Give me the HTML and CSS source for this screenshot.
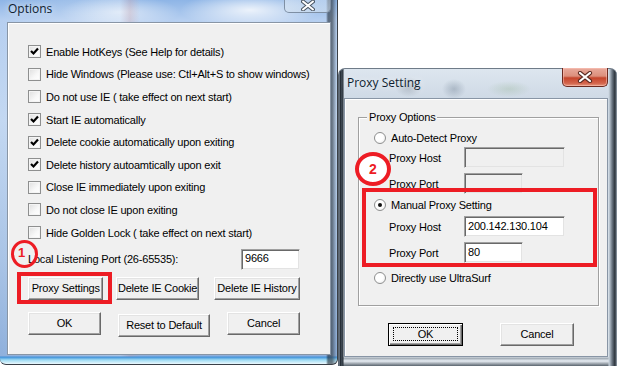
FILE: index.html
```html
<!DOCTYPE html>
<html>
<head>
<meta charset="utf-8">
<title>Options / Proxy Setting</title>
<link rel="stylesheet" href="styles.css">
</head>
<body>
<div class="desk">

  <div class="win win-options">
    <div class="titlebar">
      <span class="title">Options</span>
      <span class="close close-inactive">
        <svg width="14" height="11" viewBox="0 0 14 11"><path d="M2 1.5 L12 9.5 M12 1.5 L2 9.5" stroke="#4a5563" stroke-width="4" stroke-linecap="round"/><path d="M2 1.5 L12 9.5 M12 1.5 L2 9.5" stroke="#fff" stroke-width="2" stroke-linecap="round"/></svg>
      </span>
    </div>
    <div class="client client-options">
      <div class="checks">
        <div class="check-row"><span class="cb on"><svg width="11" height="11" viewBox="0 0 11 11"><polyline points="2,5 4.5,7.5 9,2.5" fill="none" stroke="#000" stroke-width="2.2"/></svg></span><span>Enable HotKeys (See Help for details)</span></div>
        <div class="check-row"><span class="cb"></span><span>Hide Windows (Please use: Ctl+Alt+S to show windows)</span></div>
        <div class="check-row"><span class="cb"></span><span>Do not use IE ( take effect on next start)</span></div>
        <div class="check-row"><span class="cb on"><svg width="11" height="11" viewBox="0 0 11 11"><polyline points="2,5 4.5,7.5 9,2.5" fill="none" stroke="#000" stroke-width="2.2"/></svg></span><span>Start IE automatically</span></div>
        <div class="check-row"><span class="cb on"><svg width="11" height="11" viewBox="0 0 11 11"><polyline points="2,5 4.5,7.5 9,2.5" fill="none" stroke="#000" stroke-width="2.2"/></svg></span><span>Delete cookie automatically upon exiting</span></div>
        <div class="check-row"><span class="cb on"><svg width="11" height="11" viewBox="0 0 11 11"><polyline points="2,5 4.5,7.5 9,2.5" fill="none" stroke="#000" stroke-width="2.2"/></svg></span><span>Delete history autoamtically upon exit</span></div>
        <div class="check-row"><span class="cb"></span><span>Close IE immediately upon exiting</span></div>
        <div class="check-row"><span class="cb"></span><span>Do not close IE upon exiting</span></div>
        <div class="check-row"><span class="cb"></span><span>Hide Golden Lock ( take effect on next start)</span></div>
      </div>
      <div class="port-row">
        <span>Local Listening Port (26-65535):</span>
        <span class="field field-port">9666</span>
      </div>
      <div class="btn-row btn-row-1">
        <span class="btn btn-proxy">Proxy Settings</span>
        <span class="btn btn-cookie">Delete IE Cookie</span>
        <span class="btn btn-history">Delete IE History</span>
      </div>
      <div class="btn-row btn-row-2">
        <span class="btn btn-ok">OK</span>
        <span class="btn btn-reset">Reset to Default</span>
        <span class="btn btn-cancel">Cancel</span>
      </div>
    </div>
  </div>

  <div class="win win-proxy">
    <div class="titlebar titlebar-proxy">
      <span class="title">Proxy Setting</span>
      <span class="close close-active">
        <svg width="16" height="12" viewBox="0 0 16 12"><path d="M3 2 L13 10 M13 2 L3 10" stroke="#5a2a22" stroke-width="4.2" stroke-linecap="round"/><path d="M3 2 L13 10 M13 2 L3 10" stroke="#fff" stroke-width="2.2" stroke-linecap="round"/></svg>
      </span>
    </div>
    <div class="client client-proxy">
      <div class="group">
        <span class="legend">Proxy Options</span>
        <div class="radio-row radio-auto"><span class="rb"></span><span>Auto-Detect Proxy</span></div>
        <div class="field-row row-auto-host"><span class="lbl">Proxy Host</span><span class="field field-host disabled"></span></div>
        <div class="field-row row-auto-port"><span class="lbl">Proxy Port</span><span class="field field-pport disabled"></span></div>
        <div class="radio-row radio-manual"><span class="rb on"></span><span>Manual Proxy Setting</span></div>
        <div class="field-row row-man-host"><span class="lbl">Proxy Host</span><span class="field field-host">200.142.130.104</span></div>
        <div class="field-row row-man-port"><span class="lbl">Proxy Port</span><span class="field field-pport">80</span></div>
        <div class="radio-row radio-direct"><span class="rb"></span><span>Directly use UltraSurf</span></div>
      </div>
      <div class="btn-row proxy-btns">
        <span class="btn btn-default"><span class="focus">OK</span></span>
        <span class="btn btn-pcancel">Cancel</span>
      </div>
    </div>
  </div>

  <div class="mark mark-rect mark-rect-1"></div>
  <div class="mark mark-circle mark-circle-1"><span>1</span></div>
  <div class="mark mark-rect mark-rect-2"></div>
  <div class="mark mark-circle mark-circle-2"><span>2</span></div>
</div>
</body>
</html>
```

FILE: styles.css
```css
* { box-sizing: border-box; margin: 0; padding: 0; }
html, body { width: 617px; height: 369px; overflow: hidden; background: #fff; }
body {
  font-family: "Liberation Sans", Arial, sans-serif;
  font-size: 11px;
  letter-spacing: -0.2px;
  color: #000;
}
.desk { position: relative; width: 617px; height: 369px; overflow: hidden; }

/* ---------- windows ---------- */
.win { position: absolute; display: flex; flex-direction: column; }

.win-options {
  left: 0; top: 0; width: 338px; height: 365px;
  padding: 0 6px 9px 7px;
  border-radius: 0 0 6px 6px;
  border-right: 1px solid #3a3f45;
  border-bottom: 1px solid #3a4048;
  background:
    linear-gradient(90deg, transparent 0, transparent 326px, rgba(20,30,40,.55) 328px, rgba(60,70,80,.7) 332px, transparent 337px),
    linear-gradient(180deg, transparent 0, transparent 356px, #3e8fd8 357px, #9fdcf4 360px, #ffffff 365px),
    linear-gradient(90deg, rgba(255,255,255,0) 0, rgba(255,255,255,.25) 120px, rgba(210,150,150,.25) 130px, rgba(255,255,255,0) 140px),
    radial-gradient(ellipse 70px 18px at 250px 10px, rgba(255,255,255,.8), rgba(255,255,255,0)),
    radial-gradient(ellipse 60px 16px at 120px 12px, rgba(255,255,255,.55), rgba(255,255,255,0)),
    linear-gradient(180deg, #8eb5e6 0, #b6cff0 20px, #c3d8f2 120px, #a9c4e6 260px, #8fb0dc 356px);
}

.win-proxy {
  left: 338px; top: 68px; width: 279px; height: 298px;
  padding: 0 9px 9px 5px;
  border-radius: 7px 7px 0 0;
  border-top: 1px solid #6f7b88;
  border-left: 1px solid #5b6672;
  background:
    linear-gradient(90deg, #aab8c6 0, #1c232b 1px, #47525d 3px, #222a32 4px, transparent 5px),
    linear-gradient(270deg, #9aa6b2 0, #2a323a 2px, #6d7884 5px, #c9d4de 8px, transparent 9px),
    linear-gradient(180deg, transparent 0, transparent 288px, #9aa4ae 289px, #e8eef4 292px, #5a646e 297px),
    radial-gradient(ellipse 14px 10px at 70px 18px, rgba(90,100,110,.28), rgba(90,100,110,0)),
    radial-gradient(ellipse 12px 10px at 115px 20px, rgba(80,100,120,.3), rgba(80,100,120,0)),
    radial-gradient(ellipse 22px 8px at 170px 20px, rgba(120,160,110,.22), rgba(120,160,110,0)),
    linear-gradient(180deg, #dde6ef 0, #cfdae6 28px, #d9e2ec 120px, #e6ecf2 297px);
}

.titlebar {
  display: flex;
  align-items: flex-start;
  justify-content: space-between;
  height: 22px;
  flex: none;
}
.title {
  font-family: "Open Sans", "Noto Sans", sans-serif;
  font-size: 12px;
  letter-spacing: 0;
  color: #0f1d30;
  line-height: 16px;
  padding-top: 1px;
  padding-left: 1px;
  text-shadow: 0 0 6px rgba(255,255,255,.9);
}
.titlebar-proxy { height: 29px; }
.titlebar-proxy .title { padding-top: 6px; padding-left: 3px; }

.close {
  display: flex; align-items: center; justify-content: center;
  width: 47px; height: 20px;
  border-radius: 0 0 5px 5px;
}
.close-inactive {
  margin-top: -7px;
  border: 1px solid #7e8fa4;
  border-top: none;
  background: linear-gradient(180deg, rgba(255,255,255,.35), rgba(210,225,240,.6));
  padding-top: 5px;
}
.close-active {
  width: 46px; height: 19px;
  margin-top: -1px;
  border: 1px solid #6b2a20;
  border-top: none;
  background: linear-gradient(180deg, #e8aa9c 0, #dc8f7c 45%, #c5452c 55%, #d4654c 85%, #e59a80 100%);
  box-shadow: inset 0 0 0 1px rgba(255,200,190,.5);
}

.client {
  flex: 1;
  background: #f0f0f0;
  border: 1px solid #8895a5;
  box-shadow: inset 1px 1px 0 #fff;
  display: flex;
  flex-direction: column;
}

/* ---------- Options dialog ---------- */
.client-options { padding: 17.5px 30px 0 20px; }
.checks { display: flex; flex-direction: column; }
.check-row {
  display: flex; align-items: center; gap: 5px;
  height: 22.6px;
  white-space: nowrap;
}
.cb {
  width: 13px; height: 13px; flex: none;
  border: 1px solid #8e8f8f;
  background: linear-gradient(135deg, #dedede, #f8f8f8 60%, #fff);
  box-shadow: inset 0 0 0 1px #f4f4f4;
  display: flex; align-items: center; justify-content: center;
}
.cb svg { display: block; }

.port-row {
  display: flex; align-items: center; justify-content: space-between;
  height: 21px; margin-top: 5px;
}
.field {
  display: flex; align-items: center;
  height: 21px;
  background: #fff;
  border: 1px solid;
  border-color: #a0a0a0 #f0f0f0 #f0f0f0 #a0a0a0;
  box-shadow: inset 1px 1px 0 #696969, inset -1px -1px 0 #e3e3e3;
  padding: 0 3px 2px;
  font-size: 11px;
}
.field.disabled { background: #f0f0f0; }
.field-port { width: 59px; align-items: flex-start; padding-top: 2px; }

.btn-row { display: flex; align-items: flex-start; }
.btn {
  display: flex; align-items: center; justify-content: center;
  height: 23px;
  background: #f0f0f0;
  border: 1px solid;
  border-color: #fff #696969 #696969 #fff;
  box-shadow: inset -1px -1px 0 #a0a0a0, inset 1px 1px 0 #e3e3e3;
  white-space: nowrap;
  padding-bottom: 1px;
}
.btn-row-1 { margin-top: 7px; }
.btn-proxy { width: 77px; }
.btn-cookie { width: 84px; margin-left: 13px; }
.btn-history { width: 88px; margin-left: 15px; }
.btn-row-2 { margin-top: 12px; }
.btn-ok { width: 74px; }
.btn-reset { width: 94px; margin-left: 17px; margin-top: 2px; }
.btn-cancel { width: 74px; margin-left: 17px; }

/* ---------- Proxy dialog ---------- */
.client-proxy { padding: 0; }
.group {
  margin: 18px 0 0 13px;
  width: 241px; height: 189px;
  border: 1px solid #a0a0a0;
  box-shadow: inset 1px 1px 0 #fff, 1px 1px 0 #fff;
  display: flex; flex-direction: column;
  padding-left: 15px;
}
.legend {
  align-self: flex-start;
  margin: -7px 0 0 -7px;
  padding: 0 2px;
  height: 13px; line-height: 13px;
  background: #f0f0f0;
}
.radio-row {
  display: flex; align-items: center; gap: 5px;
  height: 16px;
  white-space: nowrap;
}
.rb {
  width: 12px; height: 12px; flex: none;
  border-radius: 50%;
  border: 1px solid #8e8f8f;
  background: radial-gradient(circle at 40% 40%, #fff 0, #fff 45%, #e6e6e6 100%);
  display: flex; align-items: center; justify-content: center;
}
.rb.on::after {
  content: ""; width: 4px; height: 4px; border-radius: 50%; background: #111;
}
.radio-auto { margin-top: 6px; }
.radio-manual { margin-top: 3px; }
.radio-direct { margin-top: 7px; }
.field-row {
  display: flex; align-items: center;
  height: 21px;
  padding-left: 15px;
}
.lbl { width: 75px; flex: none; }
.field-host { width: 101px; }
.field-pport { width: 59px; }
.row-auto-host { margin-top: 1px; }
.row-auto-port { margin-top: 5px; }
.row-man-host { margin-top: 3px; }
.row-man-port { margin-top: 5px; }

.proxy-btns { margin: 17px 0 0 43px; gap: 37px; }
.btn-default {
  width: 75px;
  border: 1px solid #000;
  box-shadow: inset 1px 1px 0 #fff, inset -1px -1px 0 #696969, inset -2px -2px 0 #a0a0a0;
  padding: 3px 4px 4px;
}
.focus {
  flex: 1; align-self: stretch;
  display: flex; align-items: center; justify-content: center;
  border: 1px dotted #000;
}
.btn-pcancel { width: 74px; }

/* ---------- annotations ---------- */
.mark { position: absolute; border: 4px solid #ed1c24; pointer-events: none; }
.mark-rect-1 { left: 17px; top: 272px; width: 95px; height: 32px; }
.mark-rect-2 { left: 362px; top: 188px; width: 235px; height: 79px; }
.mark-circle {
  border-radius: 50%;
  display: flex; align-items: center; justify-content: center;
  color: #ed1c24;
  font-family: "Liberation Sans", Arial, sans-serif;
  font-weight: bold;
  letter-spacing: 0;
}
.mark-circle-1 { left: 11px; top: 240px; width: 27px; height: 28px; font-size: 13px; border-width: 3.5px; }
.mark-circle-1 span { margin: -4px 6px 0 0; }
.mark-circle-2 { left: 355px; top: 152px; width: 36px; height: 34px; font-size: 14px; background: #fff; }
.mark-circle-2 span { margin-top: -1px; }
```
